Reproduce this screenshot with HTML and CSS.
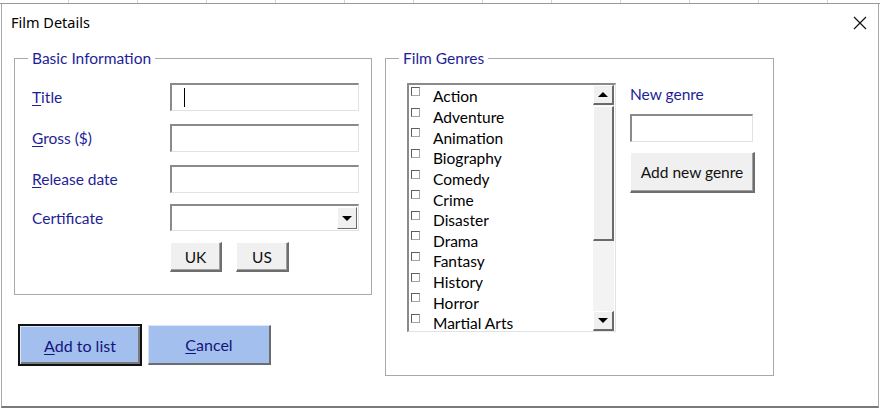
FILE: index.html
```html
<!DOCTYPE html>
<html>
<head>
<meta charset="utf-8">
<link rel="stylesheet" href="styles.css">
</head>
<body>
<div class="sheet"></div>
<div class="dialog">
  <div class="titlebar">
    <span class="title">Film Details</span>
    <svg class="close" width="14" height="14" viewBox="0 0 14 14"><path d="M1 1L13 13M13 1L1 13" stroke="#111" stroke-width="1.2" fill="none"/></svg>
  </div>
  <div class="content">
    <div class="leftcol">
      <fieldset class="group basic">
        <legend>Basic Information</legend>
        <div class="row r1"><span class="label"><u>T</u>itle</span><div class="input"><span class="caret"></span></div></div>
        <div class="row"><span class="label"><u>G</u>ross ($)</span><div class="input"></div></div>
        <div class="row"><span class="label"><u>R</u>elease date</span><div class="input"></div></div>
        <div class="row rc"><span class="label">Certificate</span><div class="input combo"><div class="dropbtn"><span class="tri down"></span></div></div></div>
        <div class="certbtns"><div class="btn uk">UK</div><div class="btn us">US</div></div>
      </fieldset>
      <div class="actions">
        <div class="bluebtn default"><span><u>A</u>dd to list</span></div>
        <div class="bluebtn cancel"><span><u>C</u>ancel</span></div>
      </div>
    </div>
    <fieldset class="group genres">
      <legend>Film Genres</legend>
      <div class="genrewrap">
        <div class="listbox">
          <div class="items">
            <div class="item"><span class="chk"></span>Action</div>
            <div class="item"><span class="chk"></span>Adventure</div>
            <div class="item"><span class="chk"></span>Animation</div>
            <div class="item"><span class="chk"></span>Biography</div>
            <div class="item"><span class="chk"></span>Comedy</div>
            <div class="item"><span class="chk"></span>Crime</div>
            <div class="item"><span class="chk"></span>Disaster</div>
            <div class="item"><span class="chk"></span>Drama</div>
            <div class="item"><span class="chk"></span>Fantasy</div>
            <div class="item"><span class="chk"></span>History</div>
            <div class="item"><span class="chk"></span>Horror</div>
            <div class="item"><span class="chk"></span>Martial Arts</div>
          </div>
          <div class="scrollbar">
            <div class="sbtn"><span class="tri up"></span></div>
            <div class="thumb"></div>
            <div class="track"></div>
            <div class="sbtn"><span class="tri down"></span></div>
          </div>
        </div>
        <div class="newgenre">
          <span class="label ng">New genre</span>
          <div class="input ninput"></div>
          <div class="btn addgenre">Add new genre</div>
        </div>
      </div>
    </fieldset>
  </div>
</div>
</body>
</html>
```

FILE: styles.css
```css
html, body {
  margin: 0;
  padding: 0;
  background: #ffffff;
  width: 880px;
  height: 409px;
  overflow: hidden;
  font-family: Lato, "Open Sans", sans-serif;
}
.sheet {
  height: 3px;
  background: repeating-linear-gradient(90deg, #ffffff 0, #ffffff 68px, #d4d4d4 68px, #d4d4d4 69px);
  border-bottom: 1px solid #9a9a9a;
}
.dialog {
  box-sizing: border-box;
  margin-left: 1px;
  width: 878px;
  height: 404px;
  border-left: 1px solid #a8a8a8;
  border-right: 1px solid #a8a8a8;
  border-bottom: 2px solid #7a7a7a;
  background: #ffffff;
  display: flex;
  flex-direction: column;
}
.titlebar {
  height: 44px;
  display: flex;
  align-items: flex-start;
  justify-content: space-between;
  padding: 0 11px 0 9px;
  box-sizing: border-box;
}
.title {
  font-family: "Noto Sans", sans-serif;
  font-size: 14.5px;
  color: #000;
  margin-top: 8px;
  line-height: 20px;
}
.close {
  margin-top: 12px;
}
.content {
  display: flex;
  padding-left: 12px;
  gap: 13px;
  align-items: flex-start;
}
.leftcol {
  display: flex;
  flex-direction: column;
}
.group {
  box-sizing: border-box;
  margin: 0;
  padding: 0;
  border: 1px solid #a9a9a9;
  min-width: 0;
}
legend {
  font-size: 15.5px;
  line-height: 20px;
  color: #1e1e98;
  padding: 0 4px;
}
.basic legend { margin-left: -4px; }
.genres legend { margin-left: -8px; }
.basic {
  width: 358px;
  height: 247px;
  padding: 15px 0 0 17px;
}
.row {
  display: flex;
  align-items: center;
  height: 28px;
  margin-bottom: 13px;
}
.row.rc {
  height: 27px;
  margin-top: -2px;
  margin-bottom: 11px;
}
.label {
  width: 138px;
  font-size: 15.5px;
  color: #1e1e98;
}
.label u {
  text-decoration-thickness: 1px;
  text-underline-offset: 2px;
}
.input {
  box-sizing: border-box;
  width: 189px;
  height: 100%;
  border-top: 2px solid #8a8a8a;
  border-left: 2px solid #8a8a8a;
  border-right: 1px solid #e2e2e2;
  border-bottom: 1px solid #e2e2e2;
  background: #fff;
  display: flex;
  align-items: center;
}
.caret {
  display: block;
  width: 1px;
  height: 19px;
  background: #000;
  margin-left: 12px;
}
.combo {
  justify-content: flex-end;
  padding-right: 1px;
}
.dropbtn {
  box-sizing: border-box;
  width: 20px;
  height: 22px;
  background: #f0f0f0;
  border-top: 1px solid #ffffff;
  border-left: 1px solid #ffffff;
  border-right: 1px solid #6a6a6a;
  border-bottom: 1px solid #6a6a6a;
  display: flex;
  align-items: center;
  justify-content: center;
}
.tri {
  display: block;
  width: 0;
  height: 0;
  border-left: 5px solid transparent;
  border-right: 5px solid transparent;
}
.tri.down { border-top: 5px solid #000; }
.tri.up { border-bottom: 5px solid #000; }
.certbtns {
  display: flex;
  gap: 14px;
  margin-left: 138px;
  margin-top: 1px;
}
.btn {
  box-sizing: border-box;
  background: #f0f0f0;
  border-top: 1px solid #ffffff;
  border-left: 1px solid #ffffff;
  border-right: 2px solid #6e6e6e;
  border-bottom: 2px solid #6e6e6e;
  box-shadow: inset -1px -1px 0 #a0a0a0;
  font-size: 15.5px;
  color: #111;
  display: flex;
  align-items: center;
  justify-content: center;
}
.uk { width: 52px; height: 30px; }
.us { width: 53px; height: 30px; }
.actions {
  display: flex;
  align-items: center;
  margin-top: 29px;
  margin-left: 4px;
  gap: 6px;
}
.bluebtn {
  box-sizing: border-box;
  background: #a3bfee;
  display: flex;
  align-items: center;
  justify-content: center;
  font-size: 16px;
  color: #14147a;
  border-top: 1px solid #dce6f8;
  border-left: 1px solid #dce6f8;
  border-right: 2px solid #6c6c6c;
  border-bottom: 2px solid #6c6c6c;
}
.bluebtn u {
  text-decoration-thickness: 1px;
  text-underline-offset: 2px;
}
.bluebtn.default {
  width: 124px;
  height: 42px;
  border: 2px solid #111;
  box-shadow: inset 1px 1px 0 #dce6f8, inset -2px -2px 0 #7a7a7a;
}
.bluebtn.cancel {
  width: 123px;
  height: 40px;
}
.genres {
  width: 389px;
  height: 328px;
  padding: 15px 0 0 21px;
}
.genrewrap {
  display: flex;
  gap: 14px;
  align-items: flex-start;
}
.listbox {
  box-sizing: border-box;
  width: 209px;
  height: 249px;
  border-top: 2px solid #8a8a8a;
  border-left: 2px solid #8a8a8a;
  border-right: 1px solid #e2e2e2;
  border-bottom: 1px solid #e2e2e2;
  display: flex;
  overflow: hidden;
}
.items {
  flex: 1;
  overflow: hidden;
  padding-top: 1px;
}
.item {
  height: 20.65px;
  display: flex;
  align-items: center;
  font-size: 15.5px;
  color: #000;
  position: relative;
  padding-left: 24px;
}
.chk {
  position: absolute;
  left: 2px;
  top: 1px;
  box-sizing: border-box;
  width: 9px;
  height: 9px;
  border-top: 1px solid #5e5e5e;
  border-left: 1px solid #5e5e5e;
  border-right: 1px solid #a5a5a5;
  border-bottom: 1px solid #a5a5a5;
  background: #fff;
}
.scrollbar {
  width: 21px;
  display: flex;
  flex-direction: column;
  background: #f3f3f3;
  margin-right: 1px;
}
.sbtn, .thumb {
  box-sizing: border-box;
  background: #f0f0f0;
  border-top: 1px solid #ffffff;
  border-left: 1px solid #ffffff;
  border-right: 2px solid #6a6a6a;
  border-bottom: 2px solid #6a6a6a;
}
.sbtn {
  height: 20px;
  display: flex;
  align-items: center;
  justify-content: center;
}
.thumb {
  height: 135px;
  margin-top: 1px;
}
.track {
  flex: 1;
}
.newgenre {
  display: flex;
  flex-direction: column;
}
.label.ng {
  width: auto;
  line-height: 20px;
  margin-top: 1px;
}
.ninput {
  width: 123px;
  height: 28px;
  margin-top: 10px;
}
.addgenre {
  width: 125px;
  height: 41px;
  margin-top: 10px;
}
```
